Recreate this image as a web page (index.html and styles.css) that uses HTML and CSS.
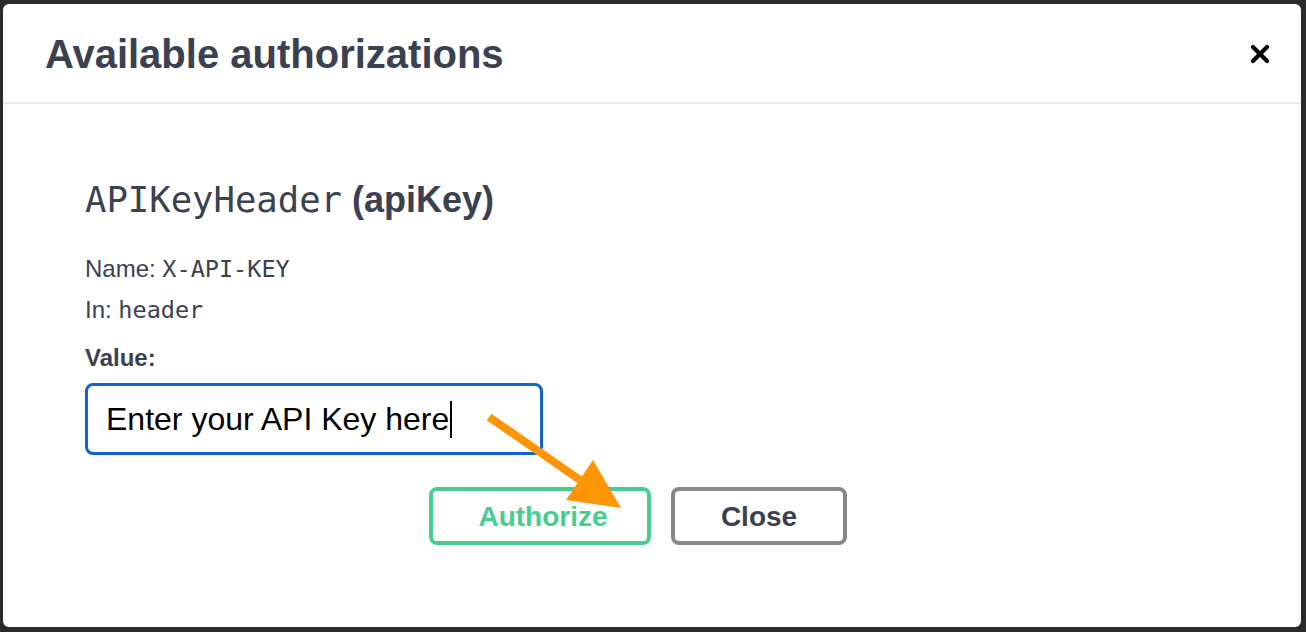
FILE: index.html
```html
<!DOCTYPE html>
<html lang="en">
<head>
<meta charset="utf-8">
<title>Available authorizations</title>
<link rel="stylesheet" href="styles.css">
</head>
<body>
<div class="backdrop">
  <div class="modal">
    <div class="modal-header">
      <h3 class="modal-title">Available authorizations</h3>
      <button class="close-btn" aria-label="Close">
        <svg width="20" height="20" viewBox="0 0 20 20" aria-hidden="true">
          <path d="M3 3 L17 17 M17 3 L3 17" stroke="#000" stroke-width="4.2" stroke-linecap="round" fill="none"/>
        </svg>
      </button>
    </div>
    <div class="modal-content">
      <div class="auth-block">
        <h4 class="auth-title"><code class="mono">APIKeyHeader</code> (apiKey)</h4>
        <p class="auth-meta">Name: <code class="mono">X-API-KEY</code></p>
        <p class="auth-meta">In: <code class="mono">header</code></p>
        <label class="value-label">Value:</label>
        <div class="value-input">Enter your API Key here<span class="caret"></span></div>
      </div>
      <div class="btn-wrapper">
        <button class="btn btn-authorize">Authorize</button>
        <button class="btn btn-close">Close</button>
      </div>
    </div>
    <svg class="annotation-arrow" width="1298" height="623" viewBox="0 0 1298 623" aria-hidden="true">
      <line x1="486" y1="413" x2="577" y2="476" stroke="#fe9504" stroke-width="8"/>
      <polygon points="590,456 563,496 618,504" fill="#fe9504"/>
    </svg>
  </div>
</div>
</body>
</html>
```

FILE: styles.css
```css
html, body {
  margin: 0;
  padding: 0;
}

body {
  background: #2b2b2b;
  height: 632px;
  overflow: hidden;
  font-family: "Liberation Sans", Arial, sans-serif;
  color: #3b4151;
}

.backdrop {
  padding: 4px 5px 5px 3px;
}

.modal {
  position: relative;
  width: 1298px;
  height: 623px;
  background: #fff;
  border-radius: 6px;
  display: flex;
  flex-direction: column;
}

.modal-header {
  display: flex;
  align-items: center;
  justify-content: space-between;
  height: 98px;
  padding: 0 31px 0 42px;
  border-bottom: 2px solid #ebebeb;
}

.modal-title {
  margin: 0;
  padding-top: 3px;
  font-size: 40px;
  line-height: 95px;
  font-weight: 700;
  color: #3b4151;
}

.close-btn {
  border: none;
  background: none;
  padding: 0;
  width: 20px;
  height: 20px;
  display: flex;
  margin-top: 2px;
}

.modal-content {
  display: flex;
  flex-direction: column;
}

.auth-block {
  padding: 74px 0 0 82px;
  display: flex;
  flex-direction: column;
  align-items: flex-start;
}

.mono {
  font-family: "DejaVu Sans Mono", "Liberation Mono", monospace;
  font-weight: 400;
}

.auth-title {
  margin: 0;
  font-size: 36px;
  line-height: 44px;
  font-weight: 700;
  color: #3b4151;
}

.auth-title .mono {
  font-size: 35.6px;
}

.auth-meta {
  margin: 0;
  font-size: 24px;
  line-height: 40px;
  color: #3b4151;
}

.auth-meta .mono {
  font-size: 23.5px;
}

.auth-meta:first-of-type {
  margin-top: 27px;
}

.auth-meta + .auth-meta {
  margin-top: 1px;
}

.value-label {
  margin-top: 8px;
  font-size: 24px;
  line-height: 40px;
  font-weight: 700;
  color: #3b4151;
}

.value-input {
  box-sizing: border-box;
  margin-top: 5px;
  width: 458px;
  height: 72px;
  border: 3px solid #1262d6;
  border-radius: 8px;
  padding-left: 18px;
  font-size: 32px;
  line-height: 66px;
  color: #000;
  white-space: nowrap;
}

.caret {
  display: inline-block;
  width: 2px;
  height: 37px;
  margin-left: 1px;
  background: #000;
  vertical-align: -8px;
}

.btn-wrapper {
  display: flex;
  justify-content: center;
  gap: 20px;
  margin-top: 32px;
}

.btn {
  box-sizing: border-box;
  height: 58px;
  border: 4px solid;
  border-radius: 8px;
  background: #fff;
  font-family: "Liberation Sans", Arial, sans-serif;
  font-size: 28px;
  font-weight: 700;
  padding: 2px 0 0;
}

.btn-authorize {
  width: 222px;
  border-color: #49cc90;
  color: #49cc90;
  padding-left: 6px;
}

.btn-close {
  width: 176px;
  border-color: #888;
  color: #3b4151;
  margin-right: 28px;
}

.annotation-arrow {
  position: absolute;
  left: 0;
  top: 0;
  pointer-events: none;
}
```
